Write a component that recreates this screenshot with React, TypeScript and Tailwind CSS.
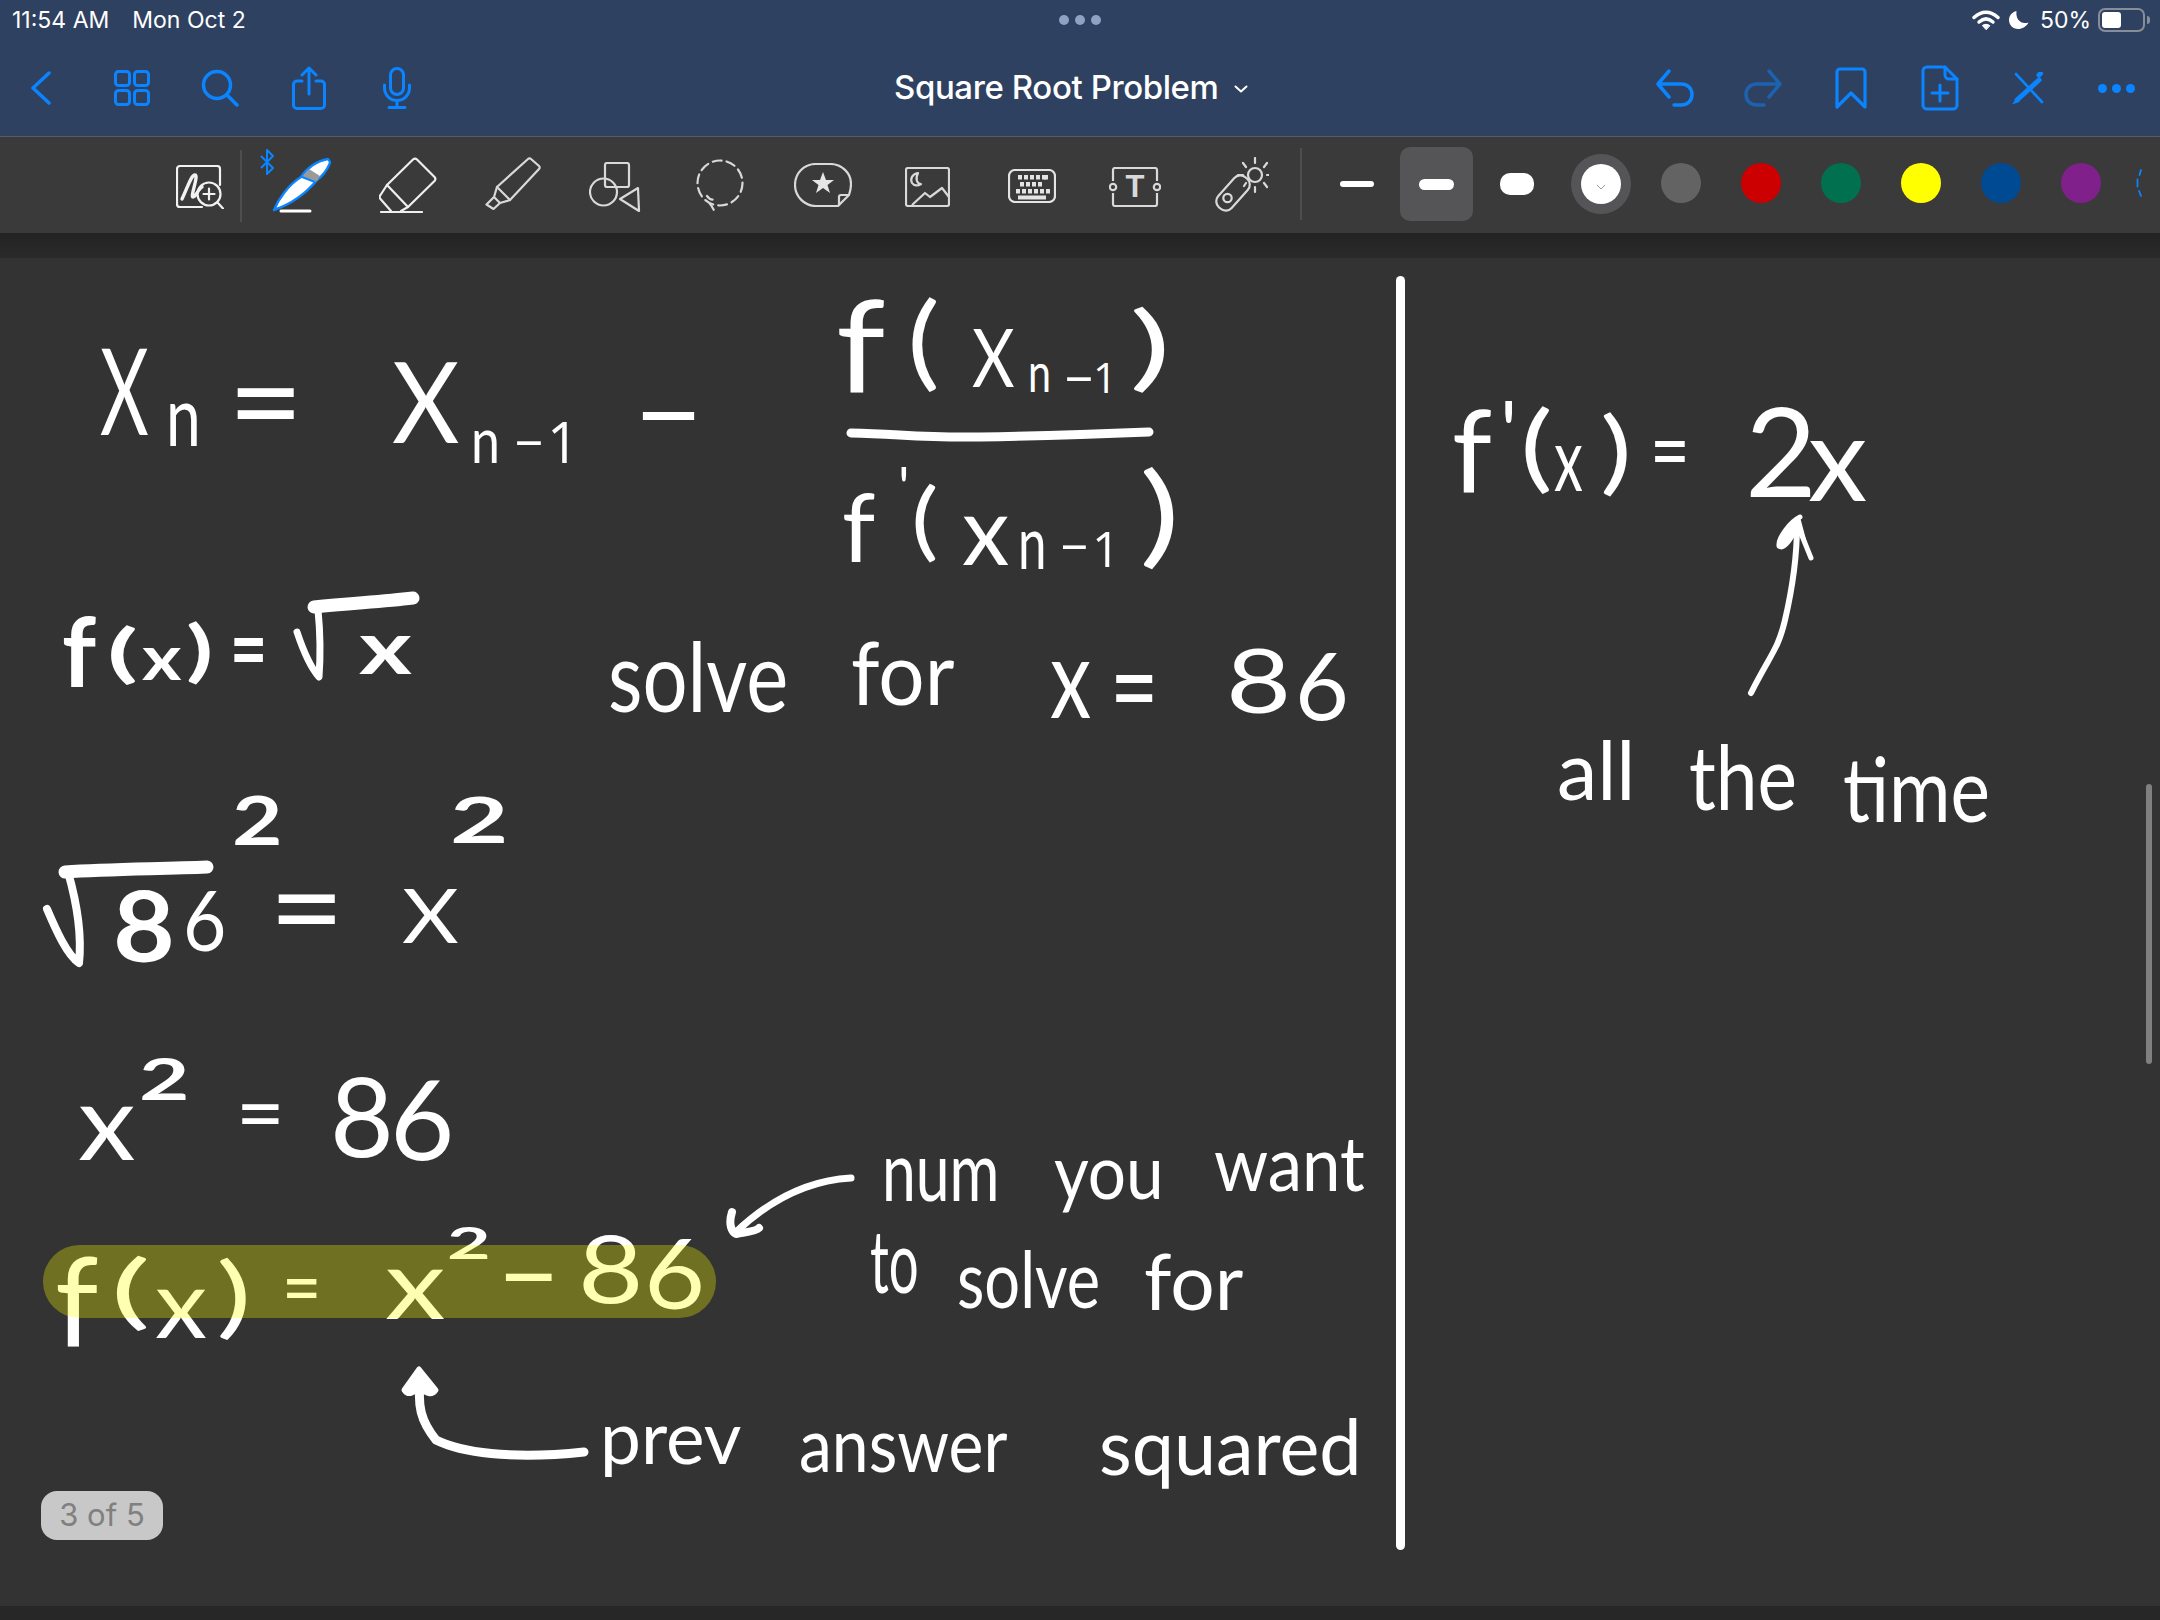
import type { ReactNode } from "react";

const blue = "#0a84ff";

function Ink({ className, children }: { className: string; children: ReactNode }) {
  return (
    <span className={`absolute origin-top-left whitespace-nowrap font-['Lato',sans-serif] leading-none text-white ${className}`}>
      {children}
    </span>
  );
}

// the handwritten "1" has no foot, Open Sans draws it that way
function One({ className }: { className: string }) {
  return (
    <span className={`absolute origin-top-left whitespace-nowrap font-['Open_Sans',sans-serif] leading-none text-white ${className}`}>
      1
    </span>
  );
}

function Swatch({ className }: { className: string }) {
  return <div className={`ml-[40px] mt-[26px] h-[40px] w-[40px] rounded-full ${className}`} />;
}

function StatusBar() {
  return (
    <div className="relative flex h-[40px] items-center pl-[12px] text-[23px] text-white">
      <span>11:54 AM</span>
      <span className="ml-[23px]">Mon Oct 2</span>
      <div className="absolute left-[1059px] top-[15px] flex gap-[6px]">
        <div className="h-[10px] w-[10px] rounded-full bg-[#8fa2c4]" />
        <div className="h-[10px] w-[10px] rounded-full bg-[#8fa2c4]" />
        <div className="h-[10px] w-[10px] rounded-full bg-[#8fa2c4]" />
      </div>
      <div className="ml-auto flex items-center pr-[10px]">
        <svg viewBox="0 0 28 20" className="h-[20px] w-[28px]" fill="none" stroke="white" strokeLinecap="round">
          <path d="M2 7.5C9.5 .5 18.5 .5 26 7.5" strokeWidth="3.4" />
          <path d="M7 12C11.5 8 16.5 8 21 12" strokeWidth="3.4" />
          <path d="M14 19.5l-3.6-4c2.2-1.6 5-1.6 7.2 0z" fill="white" stroke="white" strokeWidth="1" />
        </svg>
        <svg viewBox="0 0 20 18" className="ml-[9px] h-[18px] w-[20px]" fill="white">
          <path d="M7.5 0C3 1 0 4.700 0 9c0 5 4 9 9 9 4.400 0 8.500-2.500 10.500-6.500-1 .4-2.200 .6-3.500 .6C10.500 12.100 6.500 7 7.500 0z" />
        </svg>
        <span className="ml-[11px]">50%</span>
        <div className="ml-[7px] flex h-[24px] w-[47px] rounded-[7px] border-2 border-[#878d99] p-[2px]">
          <div className="h-full w-[19px] rounded-[3px] bg-white" />
        </div>
        <div className="ml-[2px] h-[8px] w-[3px] rounded-r-full bg-[#878d99]" />
      </div>
    </div>
  );
}

function NavBar() {
  return (
    <div className="relative flex h-[96px] items-center">
      <svg viewBox="0 0 20 34" className="ml-[31px] h-[34px] w-[20px]" fill="none" stroke={blue} strokeWidth="3.500" strokeLinecap="round" strokeLinejoin="round">
        <path d="M18 2L2 17l16 15" />
      </svg>
      <svg viewBox="0 0 36 36" className="ml-[63px] h-[36px] w-[36px]" fill="none" stroke={blue} strokeWidth="3">
        <rect x="1.500" y="1.500" width="14" height="14" rx="3" />
        <rect x="20.500" y="1.500" width="14" height="14" rx="3" />
        <rect x="1.500" y="20.500" width="14" height="14" rx="3" />
        <rect x="20.500" y="20.500" width="14" height="14" rx="3" />
      </svg>
      <svg viewBox="0 0 38 38" className="ml-[51px] h-[38px] w-[38px]" fill="none" stroke={blue} strokeWidth="3.500" strokeLinecap="round">
        <circle cx="16" cy="16" r="13.500" />
        <path d="M26 26l10 10" />
      </svg>
      <svg viewBox="0 0 34 44" className="ml-[53px] h-[44px] w-[34px]" fill="none" stroke={blue} strokeWidth="3" strokeLinecap="round" strokeLinejoin="round">
        <path d="M10 15H5a3.500 3.500 0 0 0-3.500 3.500V39A3.500 3.500 0 0 0 5 42.500h24a3.500 3.500 0 0 0 3.500-3.500V18.500A3.500 3.500 0 0 0 29 15h-5" />
        <path d="M17 28V2M10 9l7-7 7 7" />
      </svg>
      <svg viewBox="0 0 28 42" className="ml-[57px] h-[42px] w-[28px]" fill="none" stroke={blue} strokeWidth="3" strokeLinecap="round">
        <rect x="7.500" y="1.500" width="13" height="26" rx="6.500" />
        <path d="M1.500 18v3a12.500 12.500 0 0 0 25 0v-3M14 33.500v6.500M6 40.500h16" />
      </svg>

      <div className="absolute left-[894px] flex items-center font-['Inter',sans-serif] text-[33px] font-medium text-white">
        <span className="tracking-[-0.4px]">Square Root Problem</span>
        <svg viewBox="0 0 14 8" className="ml-[15px] mt-[2px] h-[8px] w-[14px]" fill="none" stroke="white" strokeWidth="2" strokeLinecap="round" strokeLinejoin="round">
          <path d="M1.500 1.500L7 6.500l5.500-5" />
        </svg>
      </div>

      <div className="ml-auto flex items-center pr-[25px]">
        <svg viewBox="0 0 38 38" className="h-[38px] w-[38px]" fill="none" stroke={blue} strokeWidth="3.500" strokeLinecap="round" strokeLinejoin="round">
          <path d="M13 2L2 15l11 13M3 15h22c6 0 11 4 11 10.500S31 36 25 36h-7" />
        </svg>
        <svg viewBox="0 0 38 38" className="ml-[50px] h-[38px] w-[38px]" fill="none" stroke="#1c62b0" strokeWidth="3.500" strokeLinecap="round" strokeLinejoin="round">
          <path d="M25 2l11 13-11 13M35 15H13C7 15 2 19 2 25.500S7 36 13 36h7" />
        </svg>
        <svg viewBox="0 0 32 42" className="ml-[53px] h-[42px] w-[32px]" fill="none" stroke={blue} strokeWidth="3.200" strokeLinecap="round" strokeLinejoin="round">
          <path d="M2 40V5a3 3 0 0 1 3-3h22a3 3 0 0 1 3 3v35L16 26z" />
        </svg>
        <svg viewBox="0 0 38 46" className="ml-[54px] h-[46px] w-[38px]" fill="none" stroke={blue} strokeWidth="3" strokeLinecap="round" strokeLinejoin="round">
          <path d="M24 2H6a4 4 0 0 0-4 4v34a4 4 0 0 0 4 4h26a4 4 0 0 0 4-4V14z" />
          <path d="M24 2v8a4 4 0 0 0 4 4h8M19 20v16M11 28h16" />
        </svg>
        <svg viewBox="0 0 32 32" className="ml-[53px] h-[32px] w-[32px]" fill="none" stroke={blue} strokeWidth="2.600" strokeLinecap="round">
          <path d="M4 2l26 28" />
          <path d="M27 8L5 28" strokeWidth="5" />
          <path d="M6 26l-4 5 5-2z" fill={blue} strokeWidth="1.500" />
          <path d="M27 3l1.500-1.500" strokeWidth="5" />
        </svg>
        <div className="ml-[54px] flex gap-[5px]">
          <div className="h-[9px] w-[9px] rounded-full bg-[#0a84ff]" />
          <div className="h-[9px] w-[9px] rounded-full bg-[#0a84ff]" />
          <div className="h-[9px] w-[9px] rounded-full bg-[#0a84ff]" />
        </div>
      </div>
    </div>
  );
}

function Keys() {
  const rows = [
    { y: 6, xs: [11, 17, 23, 29, 35, 41 - 4] },
    { y: 13, xs: [13, 19, 25, 31] },
    { y: 20, xs: [9, 15, 21, 27, 33, 39] },
  ];
  return (
    <>
      {rows.map((row) =>
        row.xs.map((x) => <rect key={`${row.y}-${x}`} x={x - 1} y={row.y} width="4" height="4.500" fill="#e4e4e4" />),
      )}
      <rect x="10" y="26.500" width="28" height="4" fill="#e4e4e4" />
    </>
  );
}

function Toolbar() {
  return (
    <div className="relative flex h-[97px] items-start border-t border-[#5b5b5d] bg-[#3a3a3b] pl-[176px]">
      {/* zoom box */}
      <svg viewBox="0 0 48 44" className="mt-[28px] h-[44px] w-[48px]" fill="none" stroke="#f2f2f2" strokeWidth="2.200" strokeLinecap="round" strokeLinejoin="round">
        <path d="M26 42H4a3 3 0 0 1-3-3V4a3 3 0 0 1 3-3h37a3 3 0 0 1 3 3v16" />
        <circle cx="33" cy="29" r="11.500" />
        <path d="M33 23.500v11M27.500 29h11M41.500 37.500L47 43.500" />
        <path d="M6 34C11 24 15 10 19 10c4 0-5 22-2 22s5-8 9-10" strokeWidth="3.400" />
      </svg>
      <div className="ml-[16px] mt-[13px] h-[72px] w-[2px] bg-[#4e4e50]" />

      {/* pen */}
      <svg viewBox="0 0 60 56" className="ml-[30px] mt-[20px] h-[56px] w-[60px]" strokeLinejoin="round">
        <path d="M2 53C6 43 16 28 29 20 34 12 44 4 56 2c2 2 2 3 2 4-3 7-6 12-13 17C36 34 22 46 2 53z" fill="white" stroke={blue} strokeWidth="2.400" />
        <path d="M30 20l13 5c2-1 3-2 5-6L37 12z" fill="#9a9a9a" />
        <path d="M30 20l13 5" stroke={blue} strokeWidth="2" fill="none" />
        <path d="M9 54h29" stroke="white" strokeWidth="3" strokeLinecap="round" fill="none" />
      </svg>
      <svg viewBox="0 0 16 26" className="absolute left-[259px] top-[12px] h-[26px] w-[16px]" fill="none" stroke={blue} strokeWidth="2" strokeLinejoin="round">
        <path d="M2 7l12 12-6 6V1l6 6L2 19" />
      </svg>

      {/* eraser */}
      <svg viewBox="0 0 58 56" className="ml-[47px] mt-[20px] h-[56px] w-[58px]" fill="none" stroke="#efefef" strokeWidth="2.200" strokeLinecap="round" strokeLinejoin="round">
        <path d="M34 2.500a3 3 0 0 1 4 0L55.500 20a3 3 0 0 1 0 4L29 50 8 28z" />
        <path d="M8 28L1.500 38a3 3 0 0 0 0 4L12 54M29 50l-7 4M2 55h41" />
      </svg>

      {/* highlighter */}
      <svg viewBox="0 0 56 53" className="ml-[48px] mt-[20px] h-[53px] w-[56px]" fill="none" stroke="#d9d9d9" strokeWidth="2.200" strokeLinecap="round" strokeLinejoin="round">
        <path d="M43 2a2 2 0 0 1 3 0l8 7a2 2 0 0 1 0 3L25 43 12 30z" />
        <path d="M12 30L9 40 1.500 47.500 8.500 52 15 46l10-3M9 40l6 6" />
      </svg>

      {/* shapes */}
      <svg viewBox="0 0 52 50" className="ml-[48px] mt-[25px] h-[50px] w-[52px]" fill="none" stroke="#d9d9d9" strokeWidth="2.200" strokeLinecap="round" strokeLinejoin="round">
        <rect x="16" y="1" width="24" height="24" rx="2" />
        <circle cx="14.500" cy="30" r="13.500" />
        <path d="M49 26L31 37l19 12z" />
      </svg>

      {/* lasso */}
      <svg viewBox="0 0 48 56" className="ml-[55px] mt-[21px] h-[56px] w-[48px]" fill="none" stroke="#d9d9d9" strokeWidth="2.200" strokeLinecap="round">
        <circle cx="24" cy="25" r="22.500" strokeDasharray="9 5" />
        <path d="M11 38c3 4 5 4 8 3M14 46c2 2 3 5 5 8" strokeDasharray="7 4" />
      </svg>

      {/* sticker */}
      <svg viewBox="0 0 58 44" className="ml-[50px] mt-[26px] h-[44px] w-[58px]" fill="none" stroke="#d9d9d9" strokeWidth="2.200" strokeLinejoin="round">
        <path d="M22 1h14c12 0 21 9 21 20 0 4-1 8-2 11L44 43H22C10 43 1 33 1 22 1 10 10 1 22 1z" />
        <path d="M55 32h-8a2 2 0 0 0-2 2v9" />
        <path d="M29 9l3 8h8l-6.500 5 2.500 8-7-5-7 5 2.500-8L18 17h8z" fill="#e6e6e6" stroke="none" />
      </svg>

      {/* image */}
      <svg viewBox="0 0 45 40" className="ml-[53px] mt-[30px] h-[40px] w-[45px]" fill="none" stroke="#d9d9d9" strokeWidth="2.200" strokeLinejoin="round">
        <rect x="1" y="1" width="43" height="38" rx="2" />
        <path d="M13 6c-6 1-8 6-6 10 2 3 6 3 9 1-4 0-6-5-3-11z" />
        <path d="M7 38l13-12 5 4 12-9 7 9" />
      </svg>

      {/* keyboard */}
      <svg viewBox="0 0 48 34" className="ml-[58px] mt-[32px] h-[34px] w-[48px]" fill="none" stroke="#e4e4e4" strokeWidth="2.200">
        <rect x="1" y="1" width="46" height="32" rx="6" />
        <g stroke="none"><Keys /></g>
      </svg>

      {/* text box */}
      <svg viewBox="0 0 52 40" className="ml-[53px] mt-[30px] h-[40px] w-[52px]" fill="none" stroke="#d9d9d9" strokeWidth="2.200">
        <path d="M4 14V3a2 2 0 0 1 2-2h40a2 2 0 0 1 2 2v11M4 26v11a2 2 0 0 0 2 2h40a2 2 0 0 0 2-2V26" />
        <circle cx="4" cy="20" r="3.200" />
        <circle cx="48" cy="20" r="3.200" />
        <text x="26" y="30" textAnchor="middle" fill="#d9d9d9" stroke="none" fontFamily="Liberation Sans, sans-serif" fontWeight="700" fontSize="31">T</text>
      </svg>

      {/* laser */}
      <svg viewBox="0 0 55 55" className="ml-[53px] mt-[20px] h-[55px] w-[55px]" fill="none" stroke="#d9d9d9" strokeWidth="2.200" strokeLinecap="round">
        <rect x="10" y="16" width="18" height="40" rx="8" transform="rotate(42 19 36)" />
        <circle cx="13.500" cy="41" r="4.200" />
        <circle cx="41" cy="18" r="7" />
        <path d="M41 1v5M41 30v5M24 18h5M53 18h2M29 6l3 4M53 6l-3 4M50 26l3 4M32 26l-2 3" />
      </svg>

      <div className="ml-[31px] mt-[11px] h-[72px] w-[2px] bg-[#4e4e50]" />

      {/* line widths */}
      <div className="ml-[38px] mt-[44px] h-[6px] w-[34px] rounded-full bg-white" />
      <div className="ml-[26px] mt-[10px] flex h-[74px] w-[73px] items-center justify-center rounded-[10px] bg-[#555558]">
        <div className="h-[11px] w-[35px] rounded-full bg-white" />
      </div>
      <div className="ml-[27px] mt-[36px] h-[22px] w-[34px] rounded-[10px] bg-white" />

      {/* colours */}
      <div className="ml-[37px] mt-[17px] flex h-[60px] w-[60px] items-center justify-center rounded-full bg-[#555558]">
        <div className="flex h-[40px] w-[40px] items-center justify-center rounded-full bg-white">
          <svg viewBox="0 0 10 6" className="mt-[6px] h-[6px] w-[10px]" fill="none" stroke="#9a9a9a" strokeWidth="1">
            <path d="M1 1l4 4 4-4" />
          </svg>
        </div>
      </div>
      <div className="ml-[30px] mt-[26px] h-[40px] w-[40px] rounded-full bg-[#636363]" />
      <Swatch className="bg-[#cc0000]" />
      <Swatch className="bg-[#00704f]" />
      <Swatch className="bg-[#ffff00]" />
      <Swatch className="bg-[#004a94]" />
      <Swatch className="bg-[#80208a]" />
      <svg viewBox="0 0 6 30" className="ml-[35px] mt-[31px] h-[30px] w-[6px]" fill="none" stroke={blue} strokeWidth="1.800" strokeLinecap="round">
        <path d="M5 2L3.500 7M1.500 11.500v7M3 23l2 5" />
      </svg>
    </div>
  );
}

function InkStrokes() {
  return (
    <svg viewBox="0 0 2160 1620" className="absolute left-0 top-0 h-[1620px] w-[2160px]" fill="none" stroke="white" strokeLinecap="round" strokeLinejoin="round">
      {/* fraction bar */}
      <path d="M851 433C900 434 920 438 980 437S1100 434 1149 432" strokeWidth="9" />
      {/* radicals */}
      <path d="M297 632C303 650 311 668 319 677 321 650 320 630 318 610" strokeWidth="7" />
      <path d="M314 607C350 603 380 602 413 598" strokeWidth="13" />
      <path d="M47 909C56 930 67 955 79 963 82 935 76 900 68 872" strokeWidth="8" />
      <path d="M65 872C110 869 160 869 207 867" strokeWidth="13" />
      {/* arrow to x squared */}
      <path d="M420 1385C418 1405 420 1420 436 1440 460 1452 510 1460 584 1452" strokeWidth="9" />
      <path d="M419 1369L404 1390C408 1396 412 1394 420 1388 426 1394 432 1396 436 1390z" fill="white" strokeWidth="5" />
      {/* arrow to the highlight */}
      <path d="M851 1178C815 1180 775 1195 736 1232" strokeWidth="7" />
      <path d="M732 1212C728 1225 732 1232 736 1234 745 1232 755 1232 759 1228" strokeWidth="8" />
      {/* arrow to 2x */}
      <path d="M1751 693C1770 655 1778 650 1785 620 1792 590 1797 560 1797 525" strokeWidth="6" />
      <path d="M1800 517C1790 522 1778 538 1779 546 1784 550 1790 540 1798 526L1811 558" fill="white" strokeWidth="5" />
    </svg>
  );
}

function Handwriting() {
  return (
    <div className="absolute left-0 top-0 h-[1620px] w-[2160px]">
      {/* Xn = Xn-1 - f(Xn-1) / f'(Xn-1) */}
      <Ink className="left-[100px] top-[328px] scale-x-[0.62] text-[121px]">X</Ink>
      <Ink className="left-[166px] top-[373px] scale-x-[0.75] text-[83px]">n</Ink>
      <Ink className="left-[228px] top-[333px] text-[130px]">=</Ink>
      <Ink className="left-[392px] top-[343px] scale-x-[0.92] text-[113px]">X</Ink>
      <Ink className="left-[471px] top-[409px] scale-x-[0.85] text-[61px]">n</Ink>
      <Ink className="left-[513px] top-[413px] text-[55px]">−</Ink>
      <One className="left-[547px] top-[413px] text-[56px]" />
      <Ink className="left-[634px] top-[351px] text-[119px]">−</Ink>

      <Ink className="left-[836px] top-[279px] scale-x-[1.1] text-[128px]">f</Ink>
      <Ink className="left-[907px] top-[286px] scale-x-[1.2] text-[103px]">(</Ink>
      <Ink className="left-[972px] top-[314px] scale-x-[0.8] text-[82px]">X</Ink>
      <Ink className="left-[1028px] top-[344px] scale-x-[0.75] text-[55px]">n</Ink>
      <Ink className="left-[1063px] top-[349px] text-[55px]">−</Ink>
      <One className="left-[1093px] top-[356px] text-[42px]" />
      <Ink className="left-[1129px] top-[297px] scale-x-[1.7] text-[93px]">)</Ink>

      <Ink className="left-[842px] top-[478px] text-[95px]">f</Ink>
      <Ink className="left-[898px] top-[457px] text-[57px]">'</Ink>
      <Ink className="left-[911px] top-[474px] scale-x-[1.2] text-[86px]">(</Ink>
      <Ink className="left-[962px] top-[481px] text-[95px]">x</Ink>
      <Ink className="left-[1018px] top-[505px] scale-x-[0.7] text-[73px]">n</Ink>
      <Ink className="left-[1059px] top-[518px] text-[53px]">−</Ink>
      <One className="left-[1092px] top-[524px] text-[49px]" />
      <Ink className="left-[1139px] top-[455px] scale-x-[1.4] text-[110px]">)</Ink>

      {/* f(x) = root x */}
      <Ink className="left-[62px] top-[603px] text-[95px] font-bold">f</Ink>
      <Ink className="left-[107px] top-[619px] scale-x-[1.8] text-[63px] font-bold">(</Ink>
      <Ink className="left-[142px] top-[624px] scale-x-[1.2] text-[63px] font-bold">x</Ink>
      <Ink className="left-[186px] top-[616px] scale-x-[1.5] text-[66px] font-bold">)</Ink>
      <Ink className="left-[230px] top-[602px] scale-x-[0.73] text-[88px] font-bold">=</Ink>
      <Ink className="left-[359px] top-[608px] scale-x-[1.35] text-[75px] font-bold">x</Ink>

      {/* solve for x = 86 */}
      <Ink className="left-[608px] top-[626px] scale-x-[0.82] text-[97px]">solve</Ink>
      <Ink className="left-[851px] top-[627px] scale-x-[0.93] text-[88px]">for</Ink>
      <Ink className="left-[1050px] top-[620px] scale-x-[0.75] text-[110px]">x</Ink>
      <Ink className="left-[1110px] top-[626px] scale-x-[0.72] text-[116px]">=</Ink>
      <Ink className="left-[1226px] top-[633px] scale-x-[1.25] text-[90px]">8</Ink>
      <Ink className="left-[1295px] top-[638px] text-[93px]">6</Ink>

      {/* root 86 squared = x squared */}
      <Ink className="left-[113px] top-[876px] scale-x-[1.1] text-[97px] font-bold">8</Ink>
      <Ink className="left-[183px] top-[878px] scale-x-[0.9] text-[83px]">6</Ink>
      <Ink className="left-[232px] top-[786px] scale-x-[1.3] text-[67px] font-bold">2</Ink>
      <Ink className="left-[269px] top-[841px] scale-x-[1.05] text-[124px]">=</Ink>
      <Ink className="left-[402px] top-[876px] scale-x-[1.15] text-[76px]">X</Ink>
      <Ink className="left-[450px] top-[787px] scale-x-[1.6] text-[63px] font-bold">2</Ink>

      {/* x squared = 86 */}
      <Ink className="left-[78px] top-[1067px] scale-x-[1.1] text-[105px]">x</Ink>
      <Ink className="left-[139px] top-[1049px] scale-x-[1.5] text-[58px] font-bold">2</Ink>
      <Ink className="left-[236px] top-[1068px] text-[84px]">=</Ink>
      <Ink className="left-[330px] top-[1059px] text-[110px]">8</Ink>
      <Ink className="left-[390px] top-[1062px] text-[111px]">6</Ink>

      {/* highlighted f(x) = x squared - 86 */}
      <Ink className="left-[55px] top-[1237px] text-[124px]">f</Ink>
      <Ink className="left-[110px] top-[1247px] scale-x-[1.9] text-[81px]">(</Ink>
      <Ink className="left-[155px] top-[1254px] scale-x-[1.1] text-[95px]">x</Ink>
      <Ink className="left-[216px] top-[1248px] scale-x-[1.5] text-[89px]">)</Ink>
      <Ink className="left-[282px] top-[1245px] scale-x-[0.85] text-[80px]">=</Ink>
      <Ink className="left-[385px] top-[1233px] scale-x-[1.25] text-[97px]">x</Ink>
      <Ink className="left-[447px] top-[1221px] scale-x-[1.75] text-[43px] font-bold">2</Ink>
      <Ink className="left-[498px] top-[1219px] text-[106px]">−</Ink>
      <Ink className="left-[578px] top-[1220px] scale-x-[1.2] text-[94px]">8</Ink>
      <Ink className="left-[644px] top-[1224px] scale-x-[1.1] text-[96px]">6</Ink>

      {/* notes */}
      <Ink className="left-[882px] top-[1128px] scale-x-[0.73] text-[83px]">num</Ink>
      <Ink className="left-[1054px] top-[1133px] scale-x-[0.9] text-[75px]">you</Ink>
      <Ink className="left-[1214px] top-[1125px] scale-x-[0.92] text-[75px]">want</Ink>
      <Ink className="left-[870px] top-[1215px] scale-x-[0.6] text-[88px]">to</Ink>
      <Ink className="left-[957px] top-[1238px] scale-x-[0.8] text-[79px]">solve</Ink>
      <Ink className="left-[1144px] top-[1242px] scale-x-[1.02] text-[77px]">for</Ink>
      <Ink className="left-[600px] top-[1400px] text-[73px]">prev</Ink>
      <Ink className="left-[799px] top-[1406px] scale-x-[0.88] text-[75px]">answer</Ink>
      <Ink className="left-[1099px] top-[1407px] scale-x-[0.98] text-[77px]">squared</Ink>

      {/* right of the divider */}
      <Ink className="left-[1452px] top-[392px] text-[114px]">f</Ink>
      <Ink className="left-[1500px] top-[387px] text-[85px]">'</Ink>
      <Ink className="left-[1520px] top-[396px] scale-x-[1.3] text-[95px]">(</Ink>
      <Ink className="left-[1554px] top-[412px] scale-x-[0.65] text-[89px]">x</Ink>
      <Ink className="left-[1600px] top-[402px] scale-x-[1.3] text-[92px]">)</Ink>
      <Ink className="left-[1650px] top-[403px] scale-x-[0.78] text-[88px]">=</Ink>
      <Ink className="left-[1745px] top-[387px] text-[124px]">2</Ink>
      <Ink className="left-[1808px] top-[396px] text-[119px]">x</Ink>
      <Ink className="left-[1557px] top-[728px] text-[81px]">all</Ink>
      <Ink className="left-[1689px] top-[731px] scale-x-[0.84] text-[89px]">the</Ink>
      <Ink className="left-[1843px] top-[742px] scale-x-[0.83] text-[90px]">time</Ink>

      <InkStrokes />

      {/* highlighter lies over the ink */}
      <div className="absolute left-[43px] top-[1245px] h-[73px] w-[673px] rounded-[37px] bg-[#ffff00]/30" />
      {/* page divider */}
      <div className="absolute left-[1396px] top-[276px] h-[1274px] w-[9px] rounded-full bg-white" />
    </div>
  );
}

export default function App() {
  return (
    <div className="relative flex h-[1620px] w-[2160px] flex-col overflow-hidden bg-[#333333] font-['Inter',sans-serif]">
      <header className="bg-[#2f4160]">
        <StatusBar />
        <NavBar />
      </header>
      <Toolbar />
      <div className="h-[25px] bg-gradient-to-b from-[#232324] to-[#2a2a2b]" />
      <main className="flex-1" />
      <div className="h-[14px] bg-[#272728]" />

      <Handwriting />

      <div className="absolute left-[41px] top-[1491px] flex h-[49px] w-[122px] items-center justify-center rounded-[16px] bg-[#c8c8c8] text-[31px] text-[#808080]">
        3 of 5
      </div>
      <div className="absolute left-[2146px] top-[784px] h-[280px] w-[6px] rounded-full bg-[#808080]" />
    </div>
  );
}
